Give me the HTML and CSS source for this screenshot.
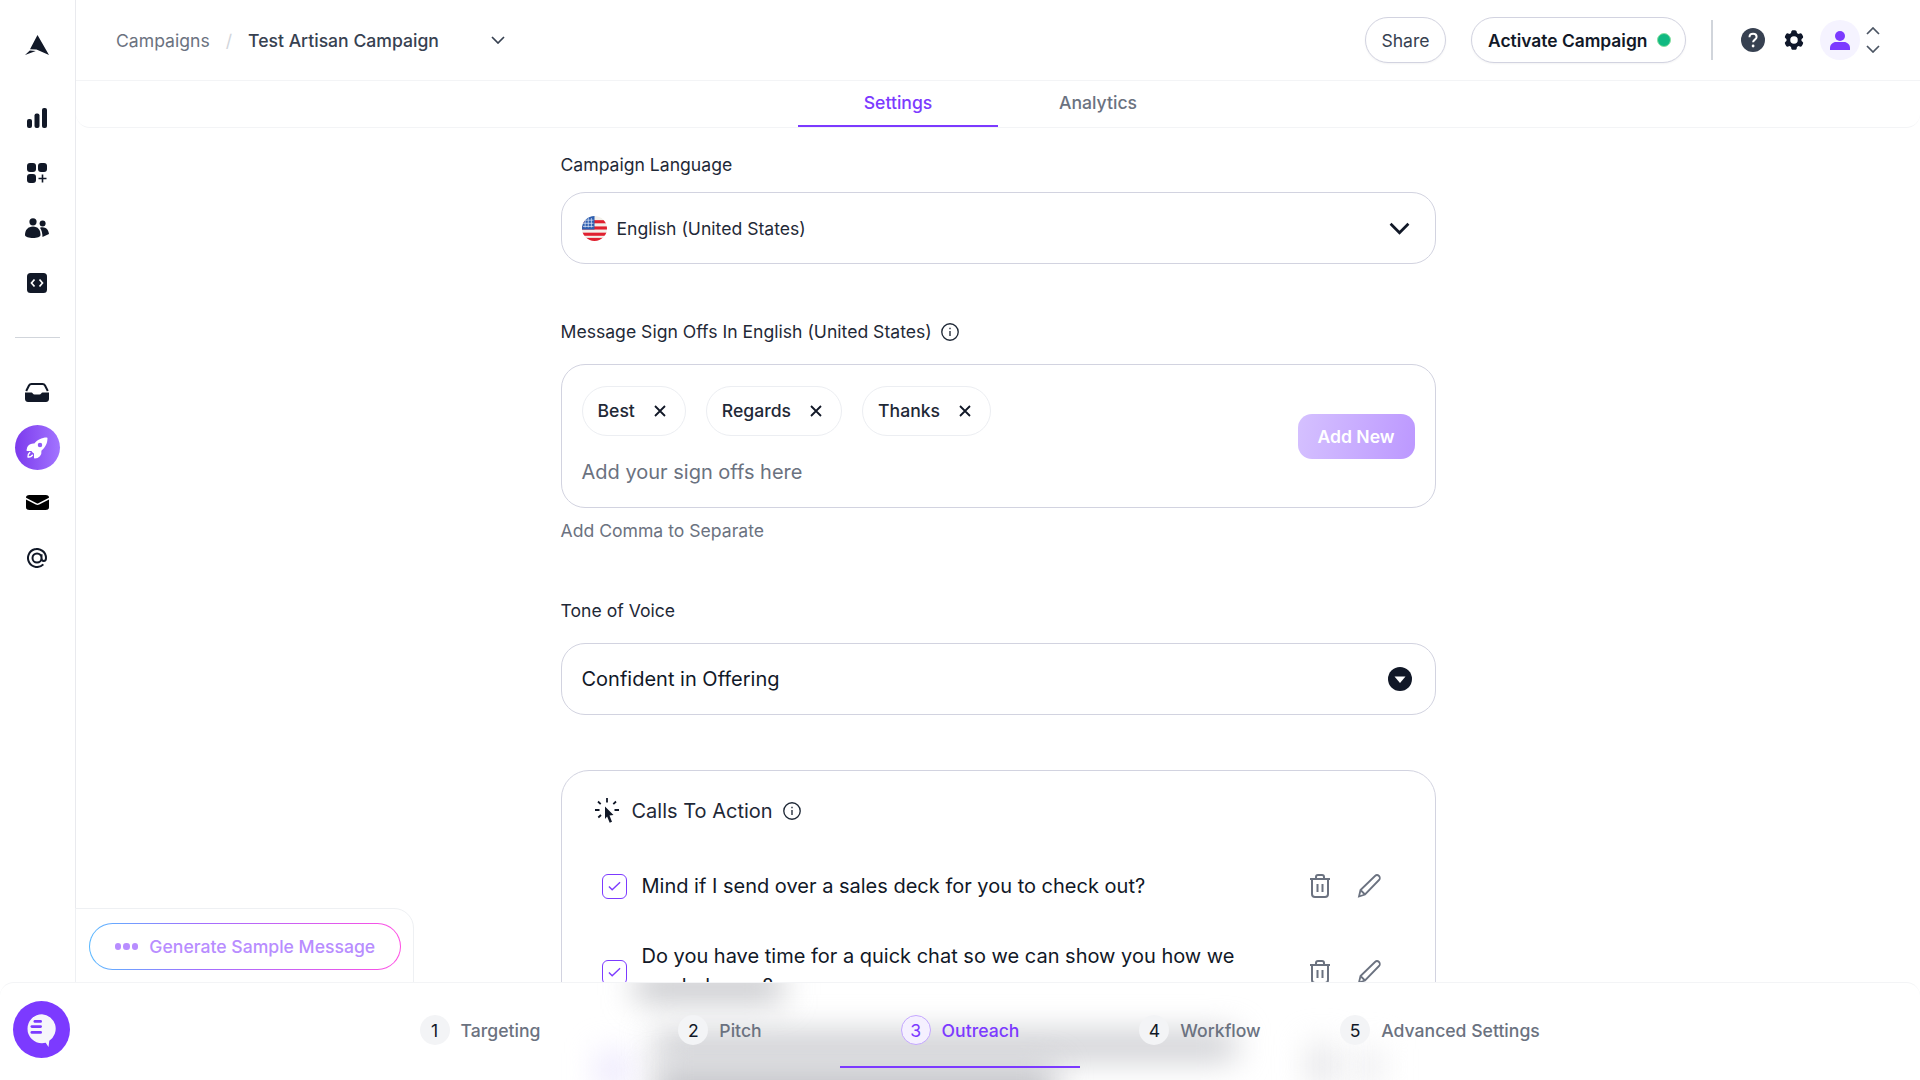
FILE: index.html
```html
<!DOCTYPE html>
<html lang="en">
<head>
<meta charset="utf-8">
<title>Test Artisan Campaign</title>
<link rel="stylesheet" href="styles.css">
</head>
<body>
<div class="app">
  <aside class="sidebar">
    <div class="nav-item logo">
      <svg class="i24" viewBox="0 0 24 20"><path d="M12.500 0 24 20 11.500 14.500 5 14.200ZM0 20l4.800-4.600 6 .5Z"/></svg>
    </div>
    <div class="nav-item"><svg class="i20" viewBox="0 0 20 20"><rect x="0" y="11" width="5" height="9" rx="2"/><rect x="7.500" y="5.500" width="5" height="14.500" rx="2"/><rect x="15" y="0" width="5" height="20" rx="2"/></svg></div>
    <div class="nav-item"><svg class="i20" viewBox="0 0 20 20"><rect x="0" y="0" width="9" height="9" rx="3"/><rect x="11" y="0" width="9" height="9" rx="3"/><rect x="0" y="11" width="9" height="9" rx="3"/><path d="M15.500 11.500v8M11.500 15.500h8" stroke="#111827" stroke-width="1.600" fill="none"/></svg></div>
    <div class="nav-item"><svg class="i24" viewBox="0 0 24 20"><circle cx="8" cy="3.800" r="3.600"/><circle cx="17.600" cy="5.600" r="3"/><path d="M0 17c0-5 3-8.500 8-8.500S15.500 12 15.500 17c0 2-3.500 3-7.500 3S0 19 0 17Z"/><path d="M15 9.700c5-1.500 8.500 1.500 9 6.300l-6.500 3c0-3.500-.8-6.800-2.500-9.300Z"/></svg></div>
    <div class="nav-item"><svg class="i20" viewBox="0 0 20 20"><rect width="20" height="20" rx="3.500"/><path d="M7.500 6.500 4.500 10l3 3.500M12.500 6.500l3 3.500-3 3.500" fill="none" stroke="#fff" stroke-width="1.700"/></svg></div>
    <div class="nav-divider"></div>
    <div class="nav-item"><svg class="i24" viewBox="0 0 24 20"><path d="M1.200 8 4 2.500C4.500 1.500 5.300 1 6.500 1h11c1.200 0 2 .5 2.500 1.500L22.800 8" fill="none" stroke="#111827" stroke-width="2"/><path d="M0 9.500h6.500c1 0 1.500 2 3 2h5c1.500 0 2-2 3-2H24V16c0 2-1.500 3-3 3H3c-1.500 0-3-1-3-3Z"/></svg></div>
    <div class="nav-item active"><svg class="i24" viewBox="0 0 24 24"><path fill-rule="evenodd" d="M9.315 7.584C12.195 3.883 16.695 1.500 21.750 1.500a.75.75 0 01.75.75c0 5.056-2.383 9.555-6.084 12.436A6.750 6.750 0 019.750 22.500a.75.75 0 01-.75-.75v-4.131A15.838 15.838 0 016.382 15H2.250a.75.75 0 01-.75-.75 6.750 6.750 0 017.815-6.666zM15 6.750a2.250 2.250 0 100 4.500 2.250 2.250 0 000-4.500z"/><path d="M5.260 17.242a.75.75 0 10-.897-1.203 5.243 5.243 0 00-2.050 5.022.75.75 0 00.625.627 5.243 5.243 0 005.022-2.051.75.75 0 10-1.202-.897 3.744 3.744 0 01-3.008 1.510c0-1.230.592-2.323 1.510-3.008z"/></svg></div>
    <div class="nav-item"><svg class="mail" viewBox="1.500 3.750 21 16.500" preserveAspectRatio="none"><path d="M1.500 8.670v8.580a3 3 0 003 3h15a3 3 0 003-3V8.670l-8.928 5.493a3 3 0 01-3.144 0L1.500 8.670z"/><path d="M22.500 6.908V6.750a3 3 0 00-3-3h-15a3 3 0 00-3 3v.158l9.714 5.978a1.500 1.500 0 001.572 0L22.500 6.908z"/></svg></div>
    <div class="nav-item"><svg class="at" viewBox="2 2 20 20"><path d="M16.500 12a4.500 4.500 0 11-9 0 4.500 4.500 0 019 0zm0 0c0 1.657 1.007 3 2.250 3S21 13.657 21 12a9 9 0 10-2.636 6.364M16.500 12V8.250"/></svg></div>
  </aside>

  <div class="main">
    <header class="topbar">
      <nav class="crumbs">
        <span class="crumb-link">Campaigns</span>
        <span class="crumb-sep">/</span>
        <span class="crumb-current">Test Artisan Campaign</span>
        <svg class="crumb-chev" viewBox="0 0 14 8" fill="none" stroke="#374151" stroke-width="1.700"><path d="m1 1 6 6 6-6"/></svg>
      </nav>
      <div class="top-actions">
        <button class="pill share">Share</button>
        <button class="pill activate">Activate Campaign<span class="dot"></span></button>
        <span class="vline"></span>
        <svg class="help" viewBox="0 0 24 24"><circle cx="12" cy="12" r="12" fill="#374151"/><path d="M8.500 9.200c0-2 1.500-3.400 3.600-3.400s3.500 1.300 3.500 3.100c0 2.700-3.500 2.800-3.500 5.400" fill="none" stroke="#fff" stroke-width="2"/><circle cx="12.100" cy="18" r="1.400" fill="#fff"/></svg>
        <svg class="gear" viewBox="2 2 20 20" fill="#0f172a"><path fill-rule="evenodd" d="M11.078 2.250c-.917 0-1.699.663-1.850 1.567L9.050 4.889c-.02.12-.115.26-.297.348a7.493 7.493 0 00-.986.57c-.166.115-.334.126-.45.083L6.300 5.508a1.875 1.875 0 00-2.282.819l-.922 1.597a1.875 1.875 0 00.432 2.385l.84.692c.095.078.17.229.154.43a7.598 7.598 0 000 1.139c.015.2-.059.352-.153.43l-.841.692a1.875 1.875 0 00-.432 2.385l.922 1.597a1.875 1.875 0 002.282.818l1.019-.382c.115-.043.283-.031.45.082.312.214.641.405.985.57.182.088.277.228.297.35l.178 1.071c.151.904.933 1.567 1.850 1.567h1.844c.916 0 1.699-.663 1.850-1.567l.178-1.072c.02-.12.114-.26.297-.349.344-.165.673-.356.985-.57.167-.114.335-.125.45-.082l1.020.382a1.875 1.875 0 002.280-.819l.923-1.597a1.875 1.875 0 00-.432-2.385l-.84-.692c-.095-.078-.17-.229-.154-.43a7.614 7.614 0 000-1.139c-.016-.2.059-.352.153-.43l.84-.692c.708-.582.891-1.590.433-2.385l-.922-1.597a1.875 1.875 0 00-2.282-.818l-1.020.382c-.114.043-.282.031-.449-.083a7.490 7.490 0 00-.985-.57c-.183-.087-.277-.227-.297-.348l-.179-1.072a1.875 1.875 0 00-1.850-1.567h-1.843zM12 15.750a3.750 3.750 0 100-7.500 3.750 3.750 0 000 7.500z"/></svg>
        <span class="avatar"><svg viewBox="0 0 20 20" fill="#7c3aff"><circle cx="10" cy="6" r="5"/><path d="M0 20v-2c0-3.500 3-6 6-6h8c3 0 6 2.500 6 6v2Z"/></svg></span>
        <span class="updown">
          <svg viewBox="0 0 14 8" fill="none" stroke="#4b5563" stroke-width="1.700"><path d="m1 7 6-6 6 6"/></svg>
          <svg viewBox="0 0 14 8" fill="none" stroke="#4b5563" stroke-width="1.700"><path d="m1 1 6 6 6-6"/></svg>
        </span>
      </div>
    </header>
    <div class="tabs">
      <div class="tab tab-on">Settings</div>
      <div class="tab">Analytics</div>
    </div>

    <div class="content">
      <div class="column">
        <label class="label first">Campaign Language</label>
        <div class="select">
          <div class="select-value">
            <svg class="flag" viewBox="0 0 24 24"><defs><clipPath id="fc"><circle cx="12" cy="12" r="12"/></clipPath></defs><g clip-path="url(#fc)"><rect width="24" height="24" fill="#f3f0ea"/><rect y="4" width="24" height="3" fill="#e0202f"/><rect y="10" width="24" height="3" fill="#e0202f"/><rect y="16" width="24" height="3" fill="#e0202f"/><rect y="21" width="24" height="3" fill="#e0202f"/><rect width="12" height="13" fill="#2f5fb0"/><path d="M3 2v9M6 1v10M9 2v9M1 4h10M1 7h10M1 10h10" stroke="#dfe8f8" stroke-width=".7"/></g></svg>
            <span>English (United States)</span>
          </div>
          <svg class="chev" viewBox="0 0 20 12" fill="none" stroke="#111827" stroke-width="2.600"><path d="m1.500 1.500 8.500 8.500 8.500-8.500"/></svg>
        </div>

        <label class="label second">Message Sign Offs In English (United States)
          <svg class="info" viewBox="0 0 16 16" fill="none" stroke="#1f2937" stroke-width="1.200"><circle cx="8" cy="8" r="7.300"/><path d="M8 7v4.500M8 4.200v1.300"/></svg>
        </label>
        <div class="signoffs">
          <div class="signoffs-main">
            <div class="chips">
              <div class="chip">Best<svg viewBox="0 0 12 12" fill="none" stroke="#111827" stroke-width="1.800"><path d="m1 1 10 10M11 1 1 11"/></svg></div>
              <div class="chip">Regards<svg viewBox="0 0 12 12" fill="none" stroke="#111827" stroke-width="1.800"><path d="m1 1 10 10M11 1 1 11"/></svg></div>
              <div class="chip">Thanks<svg viewBox="0 0 12 12" fill="none" stroke="#111827" stroke-width="1.800"><path d="m1 1 10 10M11 1 1 11"/></svg></div>
            </div>
            <div class="placeholder">Add your sign offs here</div>
          </div>
          <button class="add-new">Add New</button>
        </div>
        <div class="hint">Add Comma to Separate</div>

        <label class="label third">Tone of Voice</label>
        <div class="select">
          <div class="select-value big">Confident in Offering</div>
          <svg class="caret" viewBox="0 0 24 24"><circle cx="12" cy="12" r="12" fill="#111827"/><path d="M6.500 9.500h11L12 16Z" fill="#fff"/></svg>
        </div>

        <section class="cta-card">
          <div class="cta-head">
            <svg class="click" viewBox="0 0 24 26"><path d="M12 0v4.500M3 3.500l2.700 2.700M21 3.500l-2.700 2.700M0 12h4.500M19.500 12H24M3.300 19.500 6 17" stroke="#111827" stroke-width="1.800" fill="none"/><path d="M10 8.500 18.500 17l-4 .6 2.500 6.200-2.300 1-2.600-6.200-2.100 2.400Z" fill="#111827"/></svg>
            <span>Calls To Action</span>
            <svg class="info" viewBox="0 0 16 16" fill="none" stroke="#1f2937" stroke-width="1.200"><circle cx="8" cy="8" r="7.300"/><path d="M8 7v4.500M8 4.200v1.300"/></svg>
          </div>
          <div class="cta-rows">
            <div class="cta-row">
              <span class="check"><svg viewBox="0 0 14 10" fill="none" stroke="#7c3aff" stroke-width="1.500"><path d="m1 5.500 3.500 3.500L13 1"/></svg></span>
              <p>Mind if I send over a sales deck for you to check out?</p>
              <div class="row-icons">
                <svg viewBox="0 0 22 24" fill="none" stroke="#6b7280" stroke-width="2"><path d="M1 5h20M7 5V3c0-1 1-2 2-2h4c1 0 2 1 2 2v2M3 5v15c0 2 1 3 3 3h10c2 0 3-1 3-3V5M8.500 10v8M13.500 10v8"/></svg>
                <svg viewBox="0 0 24 24" fill="none" stroke="#6b7280" stroke-width="1.800"><path d="M2 22.500 3.500 16 18 2c1.200-1.200 3-1 4 0s1.200 2.800 0 4L8 20.500 2 22.500ZM3.500 16 8 20.500"/></svg>
              </div>
            </div>
            <div class="cta-row">
              <span class="check"><svg viewBox="0 0 14 10" fill="none" stroke="#7c3aff" stroke-width="1.500"><path d="m1 5.500 3.500 3.500L13 1"/></svg></span>
              <p>Do you have time for a quick chat so we can show you how we can help you?</p>
              <div class="row-icons">
                <svg viewBox="0 0 22 24" fill="none" stroke="#6b7280" stroke-width="2"><path d="M1 5h20M7 5V3c0-1 1-2 2-2h4c1 0 2 1 2 2v2M3 5v15c0 2 1 3 3 3h10c2 0 3-1 3-3V5M8.500 10v8M13.500 10v8"/></svg>
                <svg viewBox="0 0 24 24" fill="none" stroke="#6b7280" stroke-width="1.800"><path d="M2 22.500 3.500 16 18 2c1.200-1.200 3-1 4 0s1.200 2.800 0 4L8 20.500 2 22.500ZM3.500 16 8 20.500"/></svg>
              </div>
            </div>
          </div>
        </section>
      </div>
    </div>
  </div>

  <div class="generate-panel">
    <button class="generate"><span class="dots"><i></i><i></i><i></i></span>Generate Sample Message</button>
  </div>

  <footer class="stepbar">
    <div class="smear smear-a"></div>
    <div class="smear smear-b"></div>
    <div class="smear smear-c"></div>
    <div class="smear smear-check"></div>
    <div class="smear smear-trash"></div>
    <div class="smear smear-pencil"></div>
    <div class="chat-fab"><svg viewBox="0 0 30 34"><path d="M15 1.200a14.500 14.500 0 1 0 0 29c1.300 0 2.500-.2 3.700-.5l2.800 4.300.8-6.300A14.500 14.500 0 0 0 15 1.200Z" fill="#f6f5fb"/><rect x="6.500" y="7" width="8.500" height="2.800" rx="1.400" fill="#7c3aff"/><rect x="3.500" y="12.200" width="11.500" height="2.800" rx="1.400" fill="#7c3aff"/><rect x="3.500" y="18" width="11.500" height="2.800" rx="1.400" fill="#7c3aff"/></svg></div>
    <div class="steps">
      <div class="step"><span class="num">1</span>Targeting</div>
      <div class="step"><span class="num">2</span>Pitch</div>
      <div class="step step-on"><span class="num">3</span>Outreach</div>
      <div class="step"><span class="num">4</span>Workflow</div>
      <div class="step"><span class="num">5</span>Advanced Settings</div>
    </div>
  </footer>
</div>
</body>
</html>
```
FILE: styles.css
```css
* { box-sizing: border-box; }
html, body { margin: 0; height: 100%; }
body { font-family: Inter, "Liberation Sans", sans-serif; color: #111827; background: #fff; overflow: hidden; }
button { font-family: inherit; }

.app { position: relative; display: flex; width: 1920px; height: 1080px; overflow: hidden; }

/* Sidebar */
.sidebar { flex: 0 0 76px; border-right: 1px solid #e9eaee; padding-right: 1px; display: flex; flex-direction: column; align-items: center; gap: 10px; padding-top: 22px; }
.nav-item { width: 45px; height: 45px; flex: none; border-radius: 50%; display: flex; align-items: center; justify-content: center; }
.nav-item svg { fill: #111827; }
.nav-item.logo { margin-bottom: 18px; }
.nav-item.active { background: linear-gradient(90deg, #7c3aed, #a274ff); }
.nav-item.active svg { fill: #fff; }
.i20 { width: 20px; height: 20px; }
.i24 { width: 24px; height: 20px; }
.active .i24 { height: 24px; }
.nav-item .mail { width: 23px; height: 15px; fill: #000; }
.nav-item .at { width: 20px; height: 20px; fill: none; stroke: #111827; stroke-width: 2; }
.nav-divider { flex: none; width: 45px; height: 1px; background: #d1d5db; margin: 22px 0; }

/* Top */
.main { flex: 1; min-width: 0; display: flex; flex-direction: column; }
.topbar { flex: 0 0 81px; border-bottom: 1px solid #f3f4f6; display: flex; align-items: center; justify-content: space-between; padding: 0 40px; }
.crumbs { display: flex; align-items: center; font-size: 17.600px; }
.crumb-link { color: #6b7280; }
.crumb-sep { color: #d1d5db; margin: 0 16px; }
.crumb-current { color: #374151; font-weight: 500; }
.crumb-chev { width: 14px; height: 8px; margin-left: 52px; }
.top-actions { display: flex; align-items: center; }
.pill { height: 46px; border: 1px solid #d2d3e0; border-radius: 23px; background: #fff; display: flex; align-items: center; box-shadow: 0 1px 2px rgba(16,24,40,.05); color: #111827; }
.share { width: 81px; justify-content: center; font-size: 17.600px; color: #374151; margin-right: 25px; }
.activate { width: 215px; padding: 0 14px 0 16px; justify-content: space-between; font-size: 17.400px; font-weight: 600; }
.dot { width: 14px; height: 14px; border-radius: 50%; background: #10b981; border: 1px solid #86e0a0; }
.vline { width: 2px; height: 40px; background: #d1d5db; margin: 0 28px 0 25px; }
.help { width: 24px; height: 24px; margin-right: 19px; }
.gear { width: 20px; height: 20px; margin-right: 16px; }
.avatar { width: 40px; height: 40px; border-radius: 50%; background: #f5f3ff; display: flex; align-items: center; justify-content: center; }
.avatar svg { width: 20px; height: 20px; }
.updown { display: flex; flex-direction: column; gap: 10px; margin-left: 6px; }
.updown svg { display: block; width: 14px; height: 8px; }

.tabs { flex: 0 0 46px; display: flex; justify-content: center; border-bottom: 1px solid #f3f4f6; border-radius: 0 0 14px 14px; }
.tab { width: 200px; text-align: center; font-size: 17.600px; line-height: 43px; color: #6b7280; font-weight: 500; border-bottom: 2px solid transparent; height: 46px; }
.tab-on { color: #7c3aff; border-bottom-color: #7c3aff; }

/* Form */
.content { flex: 1; min-height: 0; overflow: hidden; }
.column { width: 875px; margin: 0 auto; }
.label { display: flex; align-items: center; gap: 9px; font-size: 17.600px; line-height: 24px; color: #1f2937; }
.first { margin: 25px 0 15px; }
.second { margin: 56px 0 20px; }
.third { margin: 56px 0 20px; }
.select { height: 72px; border: 1px solid #d2d3e0; border-radius: 24px; display: flex; align-items: center; justify-content: space-between; padding: 0 25px 0 20px; }
.select-value { display: flex; align-items: center; gap: 10px; font-size: 17.600px; color: #1f2937; }
.select-value.big { font-size: 20px; color: #111827; }
.flag { width: 25px; height: 25px; }
.chev { width: 21px; height: 13px; }
.caret { width: 24px; height: 24px; margin-right: -2px; }
.info { width: 18px; height: 18px; flex: none; }

.signoffs { height: 144px; border: 1px solid #d2d3e0; border-radius: 24px; display: flex; align-items: center; justify-content: space-between; padding: 0 20px; }
.signoffs-main { flex: 1; align-self: flex-start; padding-top: 21px; }
.chips { display: flex; gap: 20px; }
.chip { height: 50px; border: 1px solid #eceef2; border-radius: 25px; display: flex; align-items: center; gap: 19px; padding: 0 19px 1px 15px; font-size: 17.600px; font-weight: 500; color: #1f2937; }
.chip svg { width: 12px; height: 12px; }
.placeholder { margin-top: 22px; font-size: 20px; line-height: 28px; color: #6b7280; }
.add-new { width: 117px; height: 45px; border: 0; border-radius: 14px; background: linear-gradient(100deg, #d5c1ff, #bc98ff); color: #fff; font-size: 17.600px; font-weight: 600; }
.hint { margin-top: 11px; font-size: 17.600px; line-height: 24px; color: #6b7280; }

.cta-card { margin-top: 55px; border: 1px solid #d2d3e0; border-radius: 28px; padding: 25px 54px 40px 40px; }
.cta-head { display: flex; align-items: center; margin-left: -7px; font-size: 20px; line-height: 30px; color: #1f2937; gap: 10px; }
.click { width: 24px; height: 26px; margin-right: 3px; }
.cta-rows { margin-top: 45px; display: flex; flex-direction: column; gap: 40px; }
.cta-row { display: flex; align-items: center; gap: 15px; }
.cta-row p { flex: 1; margin: 0; font-size: 20px; line-height: 30px; color: #111827; }
.check { width: 25px; height: 25px; flex: none; border: 1.500px solid #7c3aff; border-radius: 6px; display: flex; align-items: center; justify-content: center; }
.check svg { width: 13px; height: 10px; }
.row-icons { display: flex; align-items: center; gap: 26px; margin-left: 20px; }
.row-icons svg { width: 22px; height: 24px; }
.row-icons svg + svg { width: 24px; }
.cta-row + .cta-row .check, .cta-row + .cta-row .row-icons { margin-top: 2px; }

/* Overlays */
.generate-panel { position: absolute; left: 75px; top: 908px; width: 339px; height: 90px; padding: 14px 13px 0 13px; background: #fff; border: 1px solid #eef0f3; border-radius: 0 20px 0 0; z-index: 2; }
.generate { width: 312px; height: 47px; border: 1.500px solid transparent; border-radius: 24px; background: linear-gradient(#fff, #fff) padding-box, linear-gradient(90deg, #58b8ff, #a070ff 35%, #ff4fe4) border-box; color: #b88dff; font-size: 17.600px; font-weight: 500; display: flex; align-items: center; justify-content: center; gap: 11px; }
.dots { display: flex; gap: 2px; }
.dots i { width: 6.500px; height: 6.500px; border-radius: 50%; background: #b88dff; }

.stepbar { position: absolute; left: 0; right: 0; top: 982px; height: 98px; overflow: hidden; border-radius: 14px 14px 0 0; border-top: 1px solid #f3f4f6; background: #fff; display: flex; justify-content: center; z-index: 3; }

/* Blurred trace of the list scrolling beneath the bar */
.smear { position: absolute; filter: blur(16px); }
.smear-a { left: 636px; top: -8px; width: 146px; height: 24px; background: #b8b9be; }
.smear-b { left: 655px; top: 50px; width: 580px; height: 26px; background: #c6c7cc; }
.smear-c { left: 655px; top: 84px; width: 400px; height: 40px; background: #c0c1c6; }
.smear-check { left: 600px; top: 70px; width: 26px; height: 34px; background: #e5dffc; }
.smear-trash { left: 1310px; top: 62px; width: 24px; height: 40px; background: #dedee2; }
.smear-pencil { left: 1358px; top: 66px; width: 22px; height: 36px; background: #e8e8eb; }

.chat-fab { position: absolute; left: 13px; top: 18px; width: 57px; height: 57px; border-radius: 50%; background: #7c3aff; display: flex; align-items: center; justify-content: center; }
.chat-fab svg { width: 30px; height: 34px; }
.steps { position: relative; display: flex; }
.step { width: 240px; height: 85px; padding-top: 11px; display: flex; align-items: center; justify-content: center; gap: 11px; font-size: 17.600px; font-weight: 500; color: #6b7280; border-bottom: 2px solid transparent; }
.num { width: 30px; height: 30px; border-radius: 50%; background: #f3f4f6; display: flex; align-items: center; justify-content: center; color: #111827; font-weight: 400; }
.step-on { color: #7c3aff; border-bottom-color: #7c3aff; }
.step-on .num { color: #7c3aff; background: #f5f0ff; border: 1px solid #c4a7ff; }
```
